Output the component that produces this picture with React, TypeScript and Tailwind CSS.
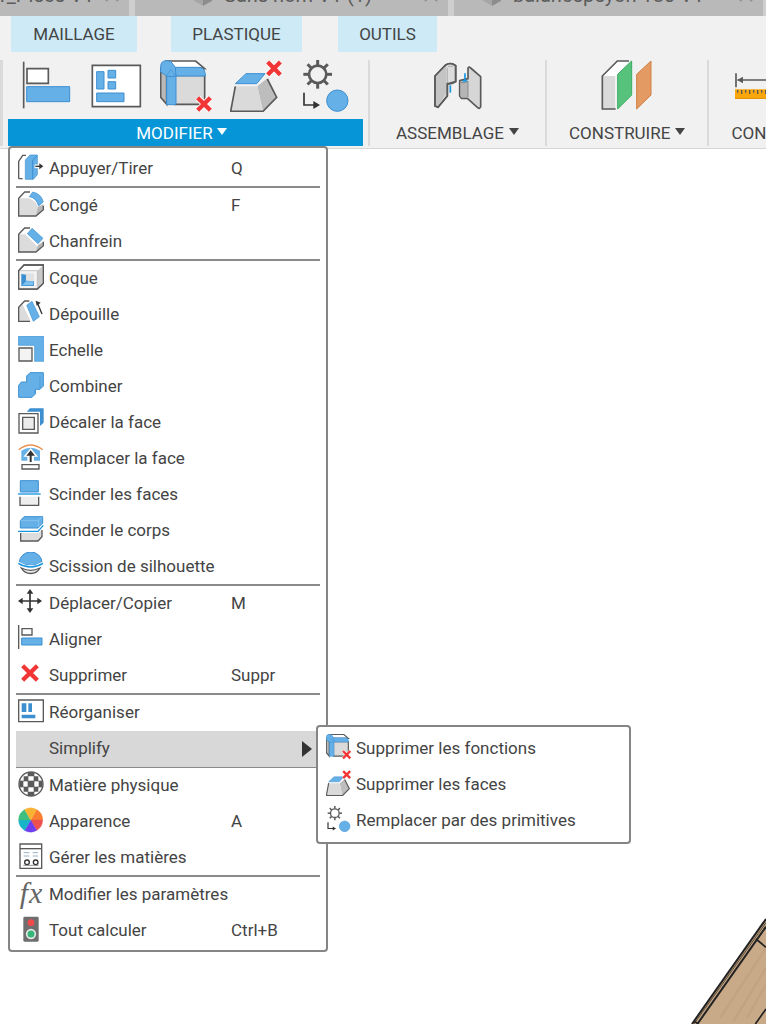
import React from "react";

const INK = "#5a5a5a";
const BLUE = "#66b0e8";
const EDGE = "#3d8fd0";
const DARK = "#333333";

type Kids = { children: React.ReactNode };

function ToolIcon({ children }: Kids) {
  return (
    <svg className="size-[52px] shrink-0" viewBox="0 0 156 156" fill="none" stroke={INK} strokeWidth="5" aria-hidden="true">
      {children}
    </svg>
  );
}

function MenuIcon({ children }: Kids) {
  return (
    <svg className="mb-1 size-[26px] shrink-0" viewBox="0 0 78 78" fill="none" stroke={INK} strokeWidth="4" aria-hidden="true">
      {children}
    </svg>
  );
}

function Cross({ x, y, r, w }: { x: number; y: number; r: number; w: number }) {
  const d = `M${x - r} ${y - r}L${x + r} ${y + r}M${x + r} ${y - r}L${x - r} ${y + r}`;
  return (
    <>
      <path d={d} stroke="#fff" strokeWidth={w + 5} />
      <path d={d} stroke="#f23535" strokeWidth={w} />
    </>
  );
}

function FilletCube({ small }: { small?: boolean }) {
  return (
    <>
      <path d="M2 25L20 45V133L2 112Z" fill="#b9b9b9" />
      <path d="M20 3H107L134 26H44Z" fill="#fff" />
      <path d="M45 46H134V133H45Z" fill="#dadada" />
      <path d="M20 134V48Q20 22 46 22H120Q136 24 136 48H48V134Z" fill={BLUE} stroke={EDGE} strokeWidth="3" />
      <path d="M2 36V20Q2 2 20 2L32 4L46 22L48 48L34 50L20 48Z" fill={BLUE} stroke={EDGE} strokeWidth="3" />
      <path d="M32 28L47 48M32 28L22 44" stroke={EDGE} strokeWidth="2" />
      {small ? <Cross x={124} y={124} r={22} w={14} /> : <Cross x={132} y={132} r={19} w={13} />}
    </>
  );
}

function DeleteFace({ small }: { small?: boolean }) {
  return (
    <>
      <path d="M82 79L112 55L140 112L99 154Z" fill="#bdbdbd" stroke="none" />
      <path d="M16 79H82L99 154H2Z" fill="#dadada" stroke="none" />
      <path d="M16 79L2 154H99L140 112L112 57" />
      <path d="M16 71L48 41H105L80 71Z" fill={BLUE} stroke={EDGE} strokeWidth="3" />
      {small ? <Cross x={124} y={28} r={21} w={14} /> : <Cross x={132} y={25} r={19} w={13} />}
    </>
  );
}

const TEETH = [0, 45, 90, 135, 180, 225, 270, 315];

function Primitives() {
  return (
    <>
      <circle cx="53" cy="43" r="26" strokeWidth="8" />
      {TEETH.map((a) => (
        <path key={a} d="M53 0V16" strokeWidth="9" transform={`rotate(${a} 53 43)`} />
      ))}
      <path d="M12 98V135H44" stroke={DARK} />
      <path d="M40 123L60 135L40 147Z" fill={DARK} stroke="none" />
      <circle cx="112" cy="122" r="32" fill={BLUE} stroke={EDGE} strokeWidth="3" />
    </>
  );
}

const sliceColors = ["#fb7d2f", "#ee5050", "#6d3df0", "#18b4c9", "#3fbf7f", "#f9b233"];

const icons: Record<string, React.ReactNode> = {
  press: (
    <>
      <path d="M2 74V22L14 4H24M2 74H14" />
      <path d="M22 18L36 3H58V62L46 76H22Z" fill={BLUE} stroke={EDGE} strokeWidth="2" />
      <path d="M44 18V75M44 18L58 5" stroke={EDGE} strokeWidth="3" />
      <path d="M50 37H66" stroke="#fff" strokeWidth="11" />
      <path d="M52 37H68" stroke={DARK} />
      <path d="M64 28L76 37L64 46Z" fill={DARK} stroke="none" />
    </>
  ),
  fillet: (
    <>
      <path d="M2 75V22H32Q58 30 62 58L54 75Z" fill="#dcdcdc" stroke="none" />
      <path d="M54 75L76 54V40L60 48Z" fill="#b5b5b5" stroke="none" />
      <path d="M36 3H20L2 22V75H54L76 56V44" />
      <path d="M34 17L44 3Q70 8 76 33L62 45Q54 20 34 17Z" fill={BLUE} stroke={EDGE} strokeWidth="2" />
    </>
  ),
  chamfer: (
    <>
      <path d="M2 75V22H22L62 62L54 75Z" fill="#dcdcdc" stroke="none" />
      <path d="M54 75L76 54V44L60 54Z" fill="#b5b5b5" stroke="none" />
      <path d="M36 3H20L2 22V75H54L76 56V44" />
      <path d="M28 20L42 4L75 34L60 50Z" fill={BLUE} stroke={EDGE} strokeWidth="2" />
    </>
  ),
  shell: (
    <>
      <path d="M2 20L18 3H76V58L58 75H2Z" fill="#fff" />
      <path d="M58 20L76 4V58L58 75Z" fill="#c9c9c9" stroke="none" />
      <path d="M2 20H58V75H2Z" fill="#f3f3f3" stroke="#aaa" strokeWidth="2" />
      <path d="M2 20L18 3H76V58L58 75H2Z" />
      <path d="M10 28H48V66H10Z" fill="#e2e2e2" stroke="none" />
      <path d="M10 30L24 32V50L48 52V66H10Z" fill={EDGE} stroke="none" />
      <path d="M12 64L24 52H46V64Z" fill="#7cc0f0" stroke="none" />
    </>
  ),
  draft: (
    <>
      <path d="M2 64V22L14 14L38 63Z" fill="#dcdcdc" stroke="none" />
      <path d="M34 3H20L2 22V64H36" />
      <path d="M26 16L42 4L64 50L46 64Z" fill={BLUE} stroke={EDGE} strokeWidth="2" />
      <path d="M58 8L72 42" stroke={DARK} />
      <path d="M53 2L68 8L56 18Z" fill={DARK} stroke="none" />
    </>
  ),
  scale: (
    <>
      <path d="M1 1H77V76H50V28H1Z" fill={BLUE} stroke={EDGE} strokeWidth="2" />
      <path d="M3 36H42V75H3Z" fill="#f3f3f3" />
    </>
  ),
  combine: (
    <>
      <path d="M2 40L10 30H26V12L36 2H76V42L66 52H52V66L42 76H2Z" fill={BLUE} stroke={EDGE} strokeWidth="3" />
      <path d="M66 14V50M52 54V64" stroke={EDGE} strokeWidth="2" />
    </>
  ),
  offset: (
    <>
      <path d="M26 11L36 1H77V44L66 54V11Z" fill={EDGE} stroke="none" />
      <path d="M3 17H60V75H3Z" fill="#fff" />
      <path d="M14 28H49V64H14Z" fill="#ececec" />
    </>
  ),
  replace: (
    <>
      <path d="M2 17Q38 -11 74 17" stroke="#e8914e" />
      <path d="M10 50V20Q38 2 66 20V50Z" fill={BLUE} stroke="none" />
      <path d="M38 12L60 38H48V52H28V38H16Z" fill="#fff" stroke="none" />
      <path d="M38 54V28" stroke={DARK} strokeWidth="6" />
      <path d="M25 35L38 19L51 35Z" fill={DARK} stroke="none" />
      <path d="M12 62H63V75H12Z" fill="#fff" />
    </>
  ),
  splitFace: (
    <>
      <path d="M7 2H61V36H7Z" fill={BLUE} stroke={EDGE} strokeWidth="3" />
      <path d="M0 42H68" stroke="#1694e0" />
      <path d="M6 50V76H62V50" fill="#eee" />
    </>
  ),
  splitBody: (
    <>
      <path d="M8 50V75H60L72 62V42" fill="#ddd" />
      <path d="M7 14L18 2H74V22L62 36H7Z" fill={BLUE} stroke={EDGE} strokeWidth="3" />
      <path d="M8 14H62V34M62 14L73 3" stroke="#94caf2" strokeWidth="2" />
      <path d="M0 46H60L76 28" stroke="#fff" strokeWidth="10" />
      <path d="M0 46H60L76 28" stroke="#1694e0" />
    </>
  ),
  silhouette: (
    <>
      <path d="M10 48A32 32 0 0 0 66 48Q38 62 10 48Z" fill="#ececec" />
      <path d="M4 32A34 32 0 0 1 72 32Q38 50 4 32Z" fill={BLUE} stroke={EDGE} strokeWidth="3" />
      <path d="M1 34Q38 56 75 34" stroke="#fff" strokeWidth="10" />
      <path d="M1 34Q38 56 75 34" stroke="#1694e0" />
    </>
  ),
  move: (
    <>
      <path d="M36 10V62M10 36H62" stroke={DARK} strokeWidth="5" />
      <path d="M36 0L46 14H26ZM36 72L46 58H26ZM0 36L14 26V46ZM72 36L58 26V46Z" fill={DARK} stroke="none" />
    </>
  ),
  align: (
    <>
      <path d="M2 0V72" />
      <path d="M12 11H42V30H12Z" fill="#fff" />
      <path d="M11 39H72V60H11Z" fill={BLUE} stroke={EDGE} strokeWidth="3" />
    </>
  ),
  remove: <Cross x={36} y={36} r={22} w={13} />,
  arrange: (
    <>
      <path d="M2 6H76V71H2Z" fill="#fff" />
      <path d="M11 16H25V42H11ZM31 16H42V42H31ZM11 50H52V61H11Z" fill={EDGE} stroke="none" />
    </>
  ),
  material: (
    <>
      <circle cx="39" cy="39" r="36" fill="#fff" />
      <path d="M30 4H48V16H30ZM30 62H48V74H30ZM4 30H16V48H4ZM62 30H74V48H62ZM30 30H48V48H30ZM17 16H30V30H17ZM48 16H61V30H48ZM17 48H30V62H17ZM48 48H61V62H48Z" fill={INK} stroke="none" />
      <path d="M30 4V74M48 4V74M4 30H74M4 48H74" strokeWidth="2" />
    </>
  ),
  appearance: (
    <>
      {sliceColors.map((c, i) => (
        <path key={c} d="M38 39L38 3A36 36 0 0 1 69.2 21Z" fill={c} stroke={c} strokeWidth="1" transform={`rotate(${30 + i * 60} 38 39)`} />
      ))}
    </>
  ),
  manage: (
    <>
      <path d="M6 3H71V76H6Z" fill="#fff" />
      <path d="M6 17H71" />
      <path d="M17 29H34M44 29H60M17 39H34M44 39H60" stroke="#9bb4c8" strokeWidth="3" />
      <circle cx="27" cy="58" r="7" stroke={DARK} />
      <circle cx="53" cy="58" r="7" stroke={DARK} />
      <path d="M16 67H62" strokeWidth="2" />
    </>
  ),
  traffic: (
    <>
      <rect x="16" y="2" width="46" height="75" rx="4" fill="#6e6e6e" stroke="none" />
      <circle cx="39" cy="20" r="10" fill="#f24a4a" stroke="none" />
      <circle cx="39" cy="54" r="13" fill="#35b877" stroke="#e6e6e6" strokeWidth="5" />
    </>
  ),
  simpleFeature: (
    <g transform="scale(0.5)" strokeWidth="7">
      <FilletCube small />
    </g>
  ),
  simpleFace: (
    <g transform="scale(0.5)" strokeWidth="7">
      <DeleteFace small />
    </g>
  ),
  simplePrimitive: (
    <g transform="scale(0.5)" strokeWidth="7">
      <Primitives />
    </g>
  ),
};

type Item = { label: string; icon?: string; keys?: string; submenu?: boolean };

const groups: Item[][] = [
  [{ label: "Appuyer/Tirer", icon: "press", keys: "Q" }],
  [
    { label: "Congé", icon: "fillet", keys: "F" },
    { label: "Chanfrein", icon: "chamfer" },
  ],
  [
    { label: "Coque", icon: "shell" },
    { label: "Dépouille", icon: "draft" },
    { label: "Echelle", icon: "scale" },
    { label: "Combiner", icon: "combine" },
    { label: "Décaler la face", icon: "offset" },
    { label: "Remplacer la face", icon: "replace" },
    { label: "Scinder les faces", icon: "splitFace" },
    { label: "Scinder le corps", icon: "splitBody" },
    { label: "Scission de silhouette", icon: "silhouette" },
  ],
  [
    { label: "Déplacer/Copier", icon: "move", keys: "M" },
    { label: "Aligner", icon: "align" },
    { label: "Supprimer", icon: "remove", keys: "Suppr" },
  ],
  [
    { label: "Réorganiser", icon: "arrange" },
    { label: "Simplify", submenu: true },
  ],
  [
    { label: "Matière physique", icon: "material" },
    { label: "Apparence", icon: "appearance", keys: "A" },
    { label: "Gérer les matières", icon: "manage" },
  ],
  [
    { label: "Modifier les paramètres", icon: "fx" },
    { label: "Tout calculer", icon: "traffic", keys: "Ctrl+B" },
  ],
];

const simplifyItems: Item[] = [
  { label: "Supprimer les fonctions", icon: "simpleFeature" },
  { label: "Supprimer les faces", icon: "simpleFace" },
  { label: "Remplacer par des primitives", icon: "simplePrimitive" },
];

function RowIcon({ name }: { name?: string }) {
  if (!name) return <span className="w-[26px] shrink-0" />;
  if (name === "fx")
    return (
      <span
        className="mb-1 flex w-[26px] shrink-0 justify-center gap-px font-['Liberation_Serif',serif] text-[30px] leading-[26px] text-[#666] italic"
        aria-hidden="true"
      >
        <span>f</span>
        <span>x</span>
      </span>
    );
  return <MenuIcon>{icons[name]}</MenuIcon>;
}

function MenuRow({ item }: { item: Item }) {
  return (
    <li className="relative">
      <button
        type="button"
        aria-haspopup={item.submenu ? "menu" : undefined}
        className={`flex h-9 w-full items-center gap-[5px] pl-[2px] text-left ${item.submenu ? "bg-[#d8d8d8]" : ""}`}
      >
        <RowIcon name={item.icon} />
        <span className="flex flex-1 items-center whitespace-nowrap">
          <span className={item.submenu ? "flex-1" : "min-w-[182px]"}>{item.label}</span>
          {item.keys && <span>{item.keys}</span>}
          {item.submenu && (
            <svg className="mr-2 h-4 w-[10px]" viewBox="0 0 10 16" aria-hidden="true">
              <path d="M0 0L10 8L0 16Z" fill="#333" />
            </svg>
          )}
        </span>
      </button>
      {item.submenu && (
        <ul className="absolute -top-[6px] left-[300px] w-[315px] rounded-[4px] border-2 border-[#858585] bg-white px-2 pt-1 pb-[3px]">
          {simplifyItems.map((s) => (
            <li key={s.label}>
              <button type="button" className="flex h-9 w-full items-center gap-1 text-left whitespace-nowrap">
                <RowIcon name={s.icon} />
                {s.label}
              </button>
            </li>
          ))}
        </ul>
      )}
    </li>
  );
}

function ModifyMenu() {
  return (
    <div className="absolute top-full left-0 z-10 w-80 rounded-[4px] border-2 border-[#858585] bg-white px-[6px] pt-[3px] pb-px">
      {groups.map((g, i) => (
        <ul key={g[0].label} className={i > 0 ? "-mt-px border-t-2 border-[#8a8a8a]" : ""}>
          {g.map((item) => (
            <MenuRow key={item.label} item={item} />
          ))}
        </ul>
      ))}
    </div>
  );
}

function Caret() {
  return (
    <svg className="mb-1 h-[7px] w-[10px]" viewBox="0 0 10 7" aria-hidden="true">
      <path d="M0 0H10L5 7Z" fill="currentColor" />
    </svg>
  );
}

function Section({ label, width, children }: { label: string; width: string; children: React.ReactNode }) {
  return (
    <section className={`flex shrink-0 flex-col border-l-2 border-[#dadada] px-[22px] ${width}`}>
      <div className="flex h-[52px] items-center">{children}</div>
      <button type="button" className="mt-[7px] flex h-[27px] items-center gap-[5px] pt-[2px] whitespace-nowrap">
        {label}
        <Caret />
      </button>
    </section>
  );
}

function FileTab({ title, className, first }: { title: string; className: string; first?: boolean }) {
  return (
    <div className={`flex h-4 shrink-0 items-end border-r-[6px] border-[#cfcfcf] text-[20px] text-[#5c5c5c] ${className}`}>
      {!first && (
        <svg className="mr-3 mb-[10px] h-5 w-[18px] shrink-0" viewBox="0 0 18 20" aria-hidden="true">
          <path d="M0 5L9 0L18 5V15L9 20L0 15Z" fill="#c8c8c8" />
          <path d="M9 10L18 5V15L9 20Z" fill="#8c8c8c" />
          <path d="M0 5L9 10V20L0 15Z" fill="#a6a6a6" />
        </svg>
      )}
      <span className="mb-[11px] leading-5 whitespace-nowrap">{title}</span>
      <svg className="mr-[10px] mb-[14px] ml-auto size-[14px] shrink-0" viewBox="0 0 14 14" aria-hidden="true">
        <path d="M1 1L13 13M13 1L1 13" stroke="#8f8f8f" strokeWidth="2" />
      </svg>
    </div>
  );
}

export default function App() {
  return (
    <div className="flex min-h-screen flex-col overflow-hidden bg-white font-['Roboto',sans-serif] text-[17px] text-[#444]">
      <header className="border-b border-[#d6d6d6] bg-[#f1f1f1]">
        <div className="flex h-4 overflow-hidden bg-[#b9b9b9]">
          <FileTab title="r_Pièce V1" className="w-[135px]" first />
          <FileTab title="Sans nom V1 (1)" className="w-[319px] pl-[59px]" />
          <FileTab title="balancepeyon 180 V1*" className="w-[315px] pl-[29px]" />
        </div>
        <nav className="flex h-9 pl-[11px]">
          <button type="button" className="mr-[34px] w-[126px] bg-[#cdeaf6] pt-[2px]">MAILLAGE</button>
          <button type="button" className="mr-9 w-[131px] bg-[#cdeaf6] pt-[2px]">PLASTIQUE</button>
          <button type="button" className="w-[99px] bg-[#cdeaf6] pt-[2px]">OUTILS</button>
        </nav>
        <div className="flex pt-2 pb-[2px]">
          <div className="mr-[5px] w-[3px] shrink-0 bg-[#dadada]" />
          <section className="relative mr-[5px] w-[355px] shrink-0">
            <div className="flex gap-[18px] pl-3">
              <ToolIcon>
                <path d="M11 5V145" />
                <path d="M21 26H85V70H21Z" fill="#fff" />
                <path d="M20 80H149V125H20Z" fill={BLUE} stroke={EDGE} strokeWidth="3" />
              </ToolIcon>
              <ToolIcon>
                <path d="M7 16H151V140H7Z" fill="#fff" />
                <path d="M20 35H42V87H20ZM54 31H77V54H54ZM54 65H77V87H54ZM20 99H102V125H20Z" fill={BLUE} stroke={EDGE} strokeWidth="3" />
              </ToolIcon>
              <ToolIcon>
                <FilletCube />
              </ToolIcon>
              <ToolIcon>
                <DeleteFace />
              </ToolIcon>
              <ToolIcon>
                <Primitives />
              </ToolIcon>
            </div>
            <button
              type="button"
              className="mt-[7px] flex h-[27px] w-full items-center justify-center gap-1 bg-[#0696d7] pt-[2px] pr-2 text-white"
            >
              MODIFIER
              <Caret />
            </button>
            <ModifyMenu />
          </section>
          <Section label="ASSEMBLAGE" width="min-w-[177px] items-center">
            <ToolIcon>
              <path d="M9 48L41 15Q56 5 71 17V65L46 72V108L18 142L9 138Z" fill="#dcdcdc" />
              <path d="M11 48L43 18V100L18 139L11 136Z" fill="#c4c4c4" stroke="none" />
              <path d="M46 24V70M48 19H64" stroke="#9a9a9a" strokeWidth="2" />
              <path d="M9 48L41 15Q56 5 71 17V65Q60 74 46 71V108L18 142L9 138Z" strokeLinejoin="round" />
              <path d="M55 76V98" stroke="#1694e0" />
              <path d="M108 25Q110 18 116 24L146 50V140Q143 148 137 143L106 115H88L83 108V62L108 56Z" fill="#d6d6d6" strokeLinejoin="round" />
              <path d="M86 66H108V112H86Z" fill="#b5b5b5" stroke="none" />
              <path d="M83 66Q95 72 108 64V112" stroke="#8a8a8a" strokeWidth="3" />
              <path d="M99 40V64M91 63H106" stroke="#1694e0" />
            </ToolIcon>
          </Section>
          <Section label="CONSTRUIRE" width="min-w-[161px] items-center">
            <ToolIcon>
              <path d="M4 48L49 3H84L46 48Z" fill="#fff" stroke="none" />
              <path d="M4 48H42V148H4Z" fill="#dadada" stroke="none" />
              <path d="M84 3H49L4 48V147H44" />
              <path d="M50 43L92 3V105L50 147Z" fill="#57c27c" stroke="#3cad64" strokeWidth="3" />
              <path d="M107 43L150 3V105L107 147Z" fill="#e39a63" stroke="#cf8145" strokeWidth="3" />
            </ToolIcon>
          </Section>
          <Section label="CONTRÔLER" width="items-start">
            <div className="pl-1">
              <ToolIcon>
                <path d="M3 40V82M8 60H148M153 40V82" />
                <path d="M6 60L24 50V70ZM150 60L132 50V70Z" fill={INK} stroke="none" />
                <path d="M0 88H156V116H0Z" fill="#fba60a" stroke="none" />
                <path d="M0 115H156" stroke="#e28f00" strokeWidth="3" />
                <path d="M8 90V98M20 90V102M32 90V98M44 90V102M56 90V98M68 90V102M80 90V98M92 90V102M104 90V98M116 90V102M128 90V98M140 90V102" strokeWidth="4" />
              </ToolIcon>
            </div>
          </Section>
        </div>
      </header>
      <main className="relative flex-1">
        <svg className="absolute right-0 bottom-0 h-[106px] w-[76px]" viewBox="0 0 228 318" aria-hidden="true">
          <path d="M228 0L4 318H228Z" fill="#c9aa88" />
          <path d="M228 90L90 300M228 150L130 310M228 200L170 300" stroke="#c2a280" strokeWidth="7" />
          <path d="M228 3L6 318" stroke="#222" strokeWidth="6" />
          <path d="M228 26L22 318" stroke="#222" strokeWidth="6" />
          <path d="M228 14L12 318" stroke="#5a4a3a" strokeWidth="3" />
          <path d="M198 63L228 88M228 273L196 318M12 310L26 318" stroke="#222" strokeWidth="5" />
        </svg>
      </main>
    </div>
  );
}
